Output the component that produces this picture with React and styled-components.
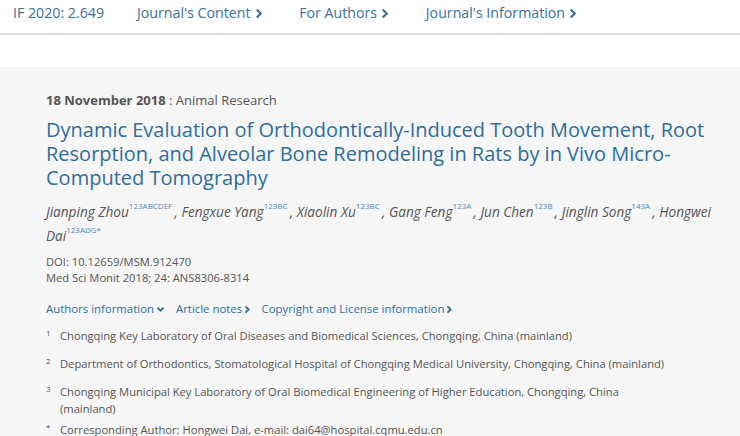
import React from 'react'
import styled, { createGlobalStyle } from 'styled-components'

const GlobalStyle = createGlobalStyle`
  html, body {
    margin: 0;
    padding: 0;
    background: #f6f6f6;
    font-family: "Open Sans", "Liberation Sans", Arial, sans-serif;
  }
`;

const TopBar = styled.header`
  background: #fff;
  height: 35px;
  box-sizing: border-box;
  border-bottom: 2px solid #dcdcdc;
  display: flex;
  align-items: flex-start;
  padding: 3px 0 0 13px;
`;

const NavItem = styled.a`
  color: #3b6f9a;
  font-size: 14.2px;
  line-height: 20px;
  text-decoration: none;
  display: flex;
  align-items: center;
  gap: 4px;
  margin-right: ${p => p.$gap}px;
  white-space: nowrap;
`;

const Spacer = styled.div`
  background: #fff;
  height: 32px;
`;

const Main = styled.main`
  padding: 24px 46px 0;
  width: 672px;
`;

const Meta = styled.div`
  font-size: 13px;
  line-height: 18px;
  color: #555;
  margin-bottom: 9px;

  b {
    font-weight: 700;
  }
`;

const Title = styled.h1`
  margin: 0 0 10px;
  width: 660px;
  font-size: 20px;
  line-height: 24px;
  font-weight: 400;
  color: #2e6e9c;
`;

const Authors = styled.p`
  margin: 0 0 6px;
  font-size: 13.6px;
  line-height: 24px;
  font-style: italic;
  color: #555;

  sup {
    font-style: normal;
    font-size: 8px;
    color: #4a8ab8;
    vertical-align: 8px;
    line-height: 0;
  }
`;

const Citation = styled.div`
  font-size: 11.2px;
  line-height: 16px;
  color: #555;
  margin-bottom: 15px;
`;

const LinkRow = styled.div`
  display: flex;
  gap: 11px;
  font-size: 11.4px;
  line-height: 16px;
  margin-bottom: 10px;
`;

const TextLink = styled.a`
  color: #2e6e9c;
  text-decoration: none;
  display: flex;
  align-items: center;
  gap: 2px;
`;

const Affiliations = styled.ol`
  list-style: none;
  margin: 0;
  padding: 0;
  width: 622px;
`;

const Affiliation = styled.li`
  display: grid;
  grid-template-columns: 14px 1fr;
  font-size: 11.2px;
  line-height: 17px;
  color: #555;
  margin-bottom: ${p => (p.$tight ? 4 : 11)}px;

  span:first-child {
    font-size: 8px;
    line-height: 12px;
  }
`;

const Chevron = ({ down, size = 10 }) =>
  down ? (
    <svg width={size} height={size} viewBox="0 0 10 10" aria-hidden="true">
      <path d="M1.6 3 L5 6.4 L8.4 3" fill="none" stroke="currentColor" strokeWidth="2" />
    </svg>
  ) : (
    <svg width={size * 0.7} height={size} viewBox="0 0 7 10" aria-hidden="true">
      <path d="M1.6 1.4 L5.2 5 L1.6 8.6" fill="none" stroke="currentColor" strokeWidth="2" />
    </svg>
  );

const authors = [
  ['Jianping Zhou', '123ABCDEF'],
  ['Fengxue Yang', '123BC'],
  ['Xiaolin Xu', '123BC'],
  ['Gang Feng', '123A'],
  ['Jun Chen', '123B'],
  ['Jinglin Song', '143A'],
  ['Hongwei Dai', '123ADG*'],
];

const affiliations = [
  ['1', 'Chongqing Key Laboratory of Oral Diseases and Biomedical Sciences, Chongqing, China (mainland)'],
  ['2', 'Department of Orthodontics, Stomatological Hospital of Chongqing Medical University, Chongqing, China (mainland)'],
  ['3', 'Chongqing Municipal Key Laboratory of Oral Biomedical Engineering of Higher Education, Chongqing, China (mainland)'],
  ['*', 'Corresponding Author: Hongwei Dai, e-mail: dai64@hospital.cqmu.edu.cn'],
];

const App = () => {
  return (
    <>
      <GlobalStyle />
      <TopBar>
        <NavItem $gap={33}>IF 2020: 2.649</NavItem>
        <NavItem $gap={37}>Journal's Content <Chevron size={11} /></NavItem>
        <NavItem $gap={37}>For Authors <Chevron size={11} /></NavItem>
        <NavItem $gap={0}>Journal's Information <Chevron size={11} /></NavItem>
      </TopBar>
      <Spacer />
      <Main>
        <Meta><b>18 November 2018</b> : Animal Research</Meta>
        <Title>
          Dynamic Evaluation of Orthodontically-Induced Tooth Movement, Root
          Resorption, and Alveolar Bone Remodeling in Rats by in Vivo
          Micro-Computed Tomography
        </Title>
        <Authors>
          {authors.map(([name, sup], i) => (
            <React.Fragment key={name}>
              {name}<sup>{sup}</sup>{i < authors.length - 1 ? '\u2009, ' : ''}
            </React.Fragment>
          ))}
        </Authors>
        <Citation>
          <div>DOI: 10.12659/MSM.912470</div>
          <div>Med Sci Monit 2018; 24: ANS8306-8314</div>
        </Citation>
        <LinkRow>
          <TextLink>Authors information <Chevron down size={9} /></TextLink>
          <TextLink>Article notes <Chevron size={9} /></TextLink>
          <TextLink>Copyright and License information <Chevron size={9} /></TextLink>
        </LinkRow>
        <Affiliations>
          {affiliations.map(([n, text], i) => (
            <Affiliation key={n} $tight={i === affiliations.length - 2}>
              <span>{n}</span>
              <span>{text}</span>
            </Affiliation>
          ))}
        </Affiliations>
      </Main>
    </>
  )
}

export default App
